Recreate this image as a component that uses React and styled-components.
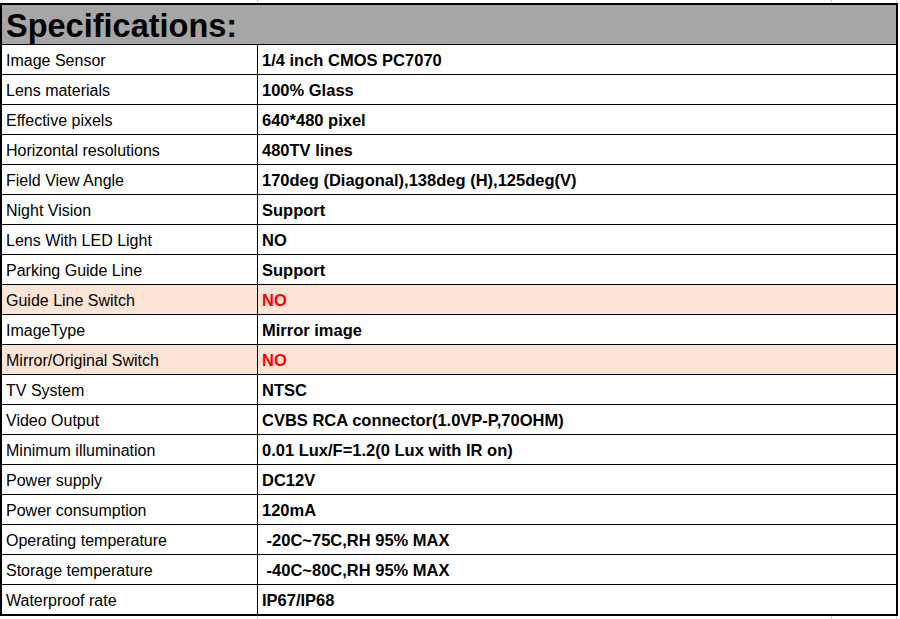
import React from "react";
import styled, { createGlobalStyle } from "styled-components";

const Global = createGlobalStyle`
  html, body { margin: 0; padding: 0; background: #ffffff; }
  body { font-family: "Liberation Sans", Arial, sans-serif; color: #000; }
`;

const Page = styled.div`
  width: 900px;
  height: 619px;
  overflow: hidden;
  display: flex;
  flex-direction: column;
`;

const Strip = styled.div`
  height: ${(p) => p.$h}px;
  flex: none;
  display: grid;
  grid-template-columns: 258px 574px 65px 1fr;
`;

const Tick = styled.div`
  border-right: 1px solid #d0d0d0;
`;

const Table = styled.div`
  width: 898px;
  flex: none;
  box-sizing: border-box;
  border: 2px solid #000;
  display: flex;
  flex-direction: column;
`;

const Header = styled.div`
  height: 40px;
  background: #a6a6a6;
  border-bottom: 1px solid #000;
  display: flex;
  align-items: center;
  padding-left: 4px;
  font-size: 32.5px;
  font-weight: 700;
  line-height: 1;
  padding-top: 4px;
  box-sizing: border-box;
`;

const Row = styled.div`
  height: ${(p) => (p.$last ? 29 : 30)}px;
  box-sizing: border-box;
  display: grid;
  grid-template-columns: 256px 1fr;
  background: ${(p) => (p.$highlight ? "#fce4d6" : "#ffffff")};
  border-bottom: ${(p) => (p.$last ? "none" : "1px solid #000")};
`;

const Label = styled.div`
  display: flex;
  align-items: center;
  padding: 2px 0 0 4px;
  font-size: 16px;
  border-right: 1px solid #000;
`;

const Value = styled.div`
  display: flex;
  align-items: center;
  padding: 2px 0 0 4px;
  font-size: 16.5px;
  font-weight: 700;
  white-space: pre;
  color: ${(p) => (p.$red ? "#ff0000" : "#000")};
`;

const rows = [
  ["Image Sensor", "1/4 inch CMOS PC7070"],
  ["Lens materials", "100% Glass"],
  ["Effective pixels", "640*480 pixel"],
  ["Horizontal resolutions", "480TV lines"],
  ["Field View Angle", "170deg (Diagonal),138deg (H),125deg(V)"],
  ["Night Vision", "Support"],
  ["Lens With LED Light", "NO"],
  ["Parking Guide Line", "Support"],
  ["Guide Line Switch", "NO", true],
  ["ImageType", "Mirror image"],
  ["Mirror/Original Switch", "NO", true],
  ["TV System", "NTSC"],
  ["Video Output", "CVBS RCA connector(1.0VP-P,70OHM)"],
  ["Minimum illumination", "0.01 Lux/F=1.2(0 Lux with IR on)"],
  ["Power supply", "DC12V"],
  ["Power consumption", "120mA"],
  ["Operating temperature", " -20C~75C,RH 95% MAX"],
  ["Storage temperature", " -40C~80C,RH 95% MAX"],
  ["Waterproof rate", "IP67/IP68"],
];

export default function App() {
  return (
    <Page>
      <Global />
      <Strip $h={3}>
        <Tick />
        <Tick />
        <Tick />
        <div />
      </Strip>
      <Table>
        <Header>Specifications:</Header>
        {rows.map(([label, value, hl], i) => (
          <Row key={label} $highlight={hl} $last={i === rows.length - 1}>
            <Label>{label}</Label>
            <Value $red={hl}>{value}</Value>
          </Row>
        ))}
      </Table>
      <Strip $h={5}>
        <Tick />
        <Tick />
        <Tick />
        <div />
      </Strip>
    </Page>
  );
}
